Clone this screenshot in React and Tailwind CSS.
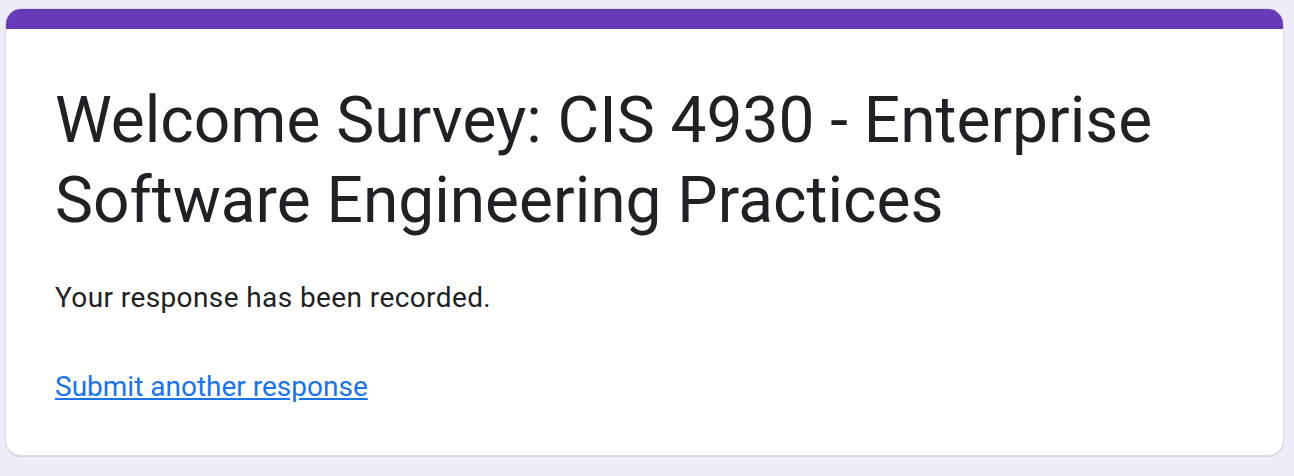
export default function App() {
  return (
    <div className="min-h-[476px] bg-[#f0ebf8] pt-[8px] pl-[5px] pr-[10px] font-['Roboto',sans-serif]">
      <div className="rounded-[16px] bg-white border border-[#dadce0] shadow-[0_1px_1px_rgba(60,64,67,0.15)] overflow-hidden">
        <div className="h-[20px] bg-[#673ab7]" />
        <div className="px-[49px] pt-[52px] pb-[48px]">
          <h1 className="text-[64px] leading-[80px] text-[#202124] font-normal">
            Welcome Survey: CIS 4930 - Enterprise Software Engineering Practices
          </h1>
          <p className="mt-[37px] text-[28px] leading-[40px] tracking-[0.4px] text-[#202124]">
            Your response has been recorded.
          </p>
          <a href="#" className="mt-[49px] inline-block text-[28px] leading-[40px] text-[#1a73e8] underline">
            Submit another response
          </a>
        </div>
      </div>
    </div>
  );
}
